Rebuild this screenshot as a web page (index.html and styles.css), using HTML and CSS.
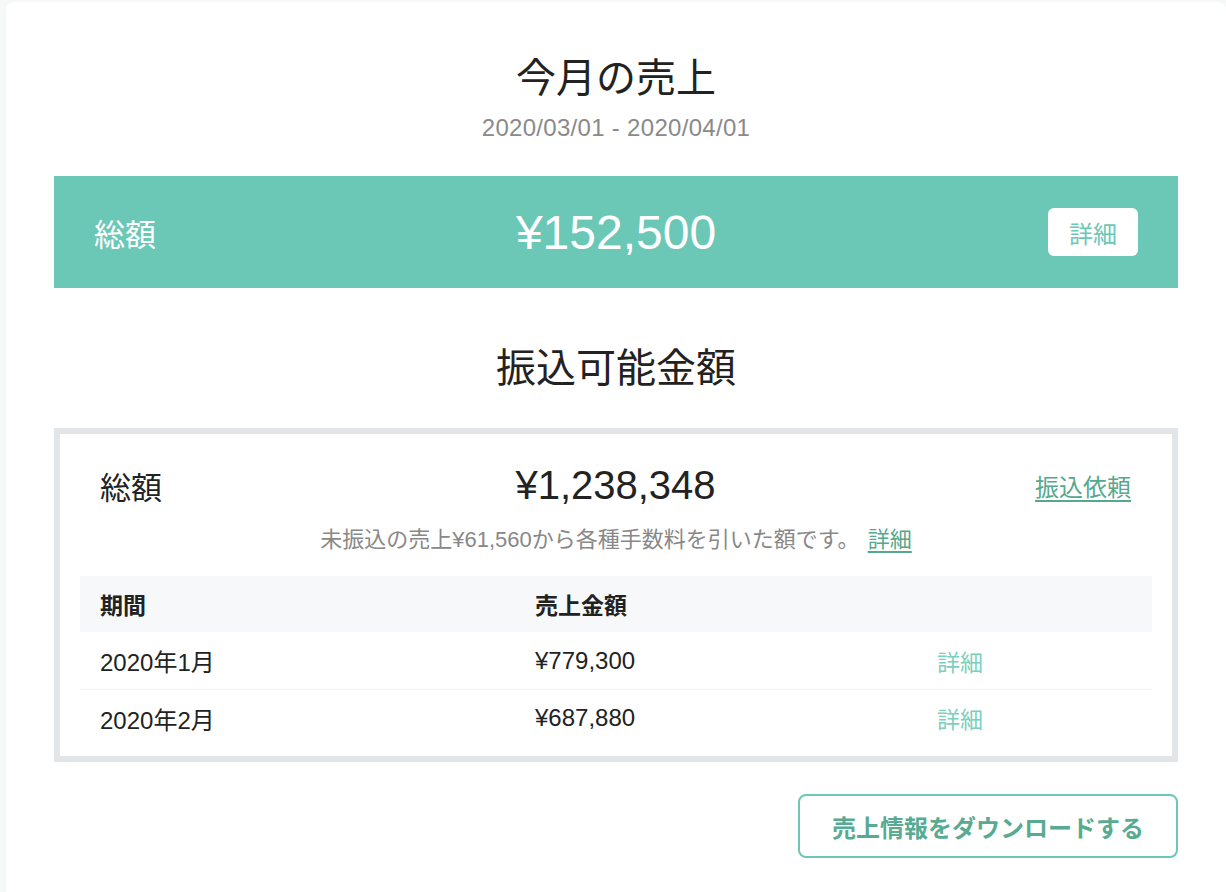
FILE: index.html
```html
<!DOCTYPE html>
<html lang="ja">
<head>
    <meta charset="UTF-8">
    <meta name="viewport" content="width=device-width, initial-scale=1">
    <title>売上</title>
    <link rel="stylesheet" href="styles.css">
</head>
<body>
<div class="sales-card">
    <h1 class="sales-title">今月の売上</h1>
    <p class="sales-period">2020/03/01 - 2020/04/01</p>

    <div class="total-band">
        <span class="total-band-label">総額</span>
        <span class="total-band-amount">¥152,500</span>
        <a class="total-band-btn" href="#">詳細</a>
    </div>

    <h2 class="sales-title sales-title-sub">振込可能金額</h2>

    <div class="transfer-box">
        <div class="transfer-head">
            <span class="transfer-label">総額</span>
            <span class="transfer-amount">¥1,238,348</span>
            <a class="transfer-link" href="#">振込依頼</a>
        </div>
        <p class="transfer-note">未振込の売上¥61,560から各種手数料を引いた額です。 <a href="#">詳細</a></p>

        <div class="sales-table">
            <div class="table-row table-row-head">
                <div class="cell">期間</div>
                <div class="cell">売上金額</div>
                <div class="cell"></div>
            </div>
            <div class="table-row">
                <div class="cell">2020年1月</div>
                <div class="cell">¥779,300</div>
                <div class="cell"><a class="row-link" href="#">詳細</a></div>
            </div>
            <div class="table-row">
                <div class="cell">2020年2月</div>
                <div class="cell">¥687,880</div>
                <div class="cell"><a class="row-link" href="#">詳細</a></div>
            </div>
        </div>
    </div>

    <div class="download-row">
        <a class="download-btn" href="#">売上情報をダウンロードする</a>
    </div>
</div>
</body>
</html>
```

FILE: styles.css
```css
* {
    margin: 0;
    padding: 0;
    box-sizing: border-box;
}

html,
body {
    width: 100%;
    height: 100%;
}

body {
    background: #f6f7f7;
    font-family: "Liberation Sans", "Noto Sans CJK JP", sans-serif;
    color: #222222;
    overflow: hidden;
}

a {
    text-decoration: none;
}

.sales-card {
    margin: 2px 0 0 6px;
    width: 1220px;
    min-height: 900px;
    background: #ffffff;
    border-radius: 8px;
    padding: 52px 48px 0;
}

.sales-title {
    font-size: 40px;
    line-height: 48px;
    font-weight: normal;
    text-align: center;
    color: #222222;
}

.sales-period {
    margin-top: 11px;
    font-size: 24px;
    line-height: 30px;
    letter-spacing: 0.3px;
    text-align: center;
    color: #8a8a8a;
}

.total-band {
    margin-top: 33px;
    height: 112px;
    background: #6cc8b6;
    color: #ffffff;
    display: grid;
    grid-template-columns: 1fr auto 1fr;
    align-items: center;
    padding: 0 40px;
}

.total-band-label {
    font-size: 31px;
}

.total-band-amount {
    font-size: 48px;
}

.total-band-btn {
    justify-self: end;
    width: 90px;
    height: 48px;
    border-radius: 6px;
    background: #ffffff;
    color: #6cc8b6;
    font-size: 24px;
    display: flex;
    align-items: center;
    justify-content: center;
}

.sales-title-sub {
    margin-top: 56px;
}

.transfer-box {
    margin-top: 36px;
    border: 6px solid #e1e5e8;
    padding: 27px 20px 10px;
}

.transfer-head {
    display: grid;
    grid-template-columns: 1fr auto 1fr;
    align-items: center;
    height: 48px;
    padding: 0 21px 0 20px;
}

.transfer-label {
    font-size: 31px;
}

.transfer-amount {
    font-size: 40px;
}

.transfer-link {
    justify-self: end;
    font-size: 24px;
    color: #56a88d;
    text-decoration: underline;
    text-underline-offset: 4px;
}

.transfer-note {
    margin-top: 17px;
    font-size: 22px;
    line-height: 28px;
    text-align: center;
    color: #888888;
}

.transfer-note a {
    margin-left: 2px;
    color: #56a88d;
    text-decoration: underline;
    text-underline-offset: 4px;
}

.sales-table {
    margin-top: 22px;
}

.table-row {
    display: grid;
    grid-template-columns: 435px 402px 1fr;
    height: 57px;
    align-items: center;
    font-size: 24px;
}

.table-row + .table-row {
    border-top: 1px solid #f0f1f2;
}

.table-row-head {
    height: 56px;
    background: #f7f8f9;
    font-weight: bold;
    font-size: 23px;
}

.table-row-head + .table-row {
    border-top: none;
}

.cell {
    padding-left: 20px;
}

.row-link {
    font-size: 23px;
    color: #7dcfbd;
}

.download-row {
    margin-top: 32px;
    display: flex;
    justify-content: flex-end;
}

.download-btn {
    width: 380px;
    height: 64px;
    border: 2px solid #6cc8b6;
    border-radius: 8px;
    color: #58ab91;
    font-size: 24px;
    font-weight: bold;
    display: flex;
    align-items: center;
    justify-content: center;
}
```
